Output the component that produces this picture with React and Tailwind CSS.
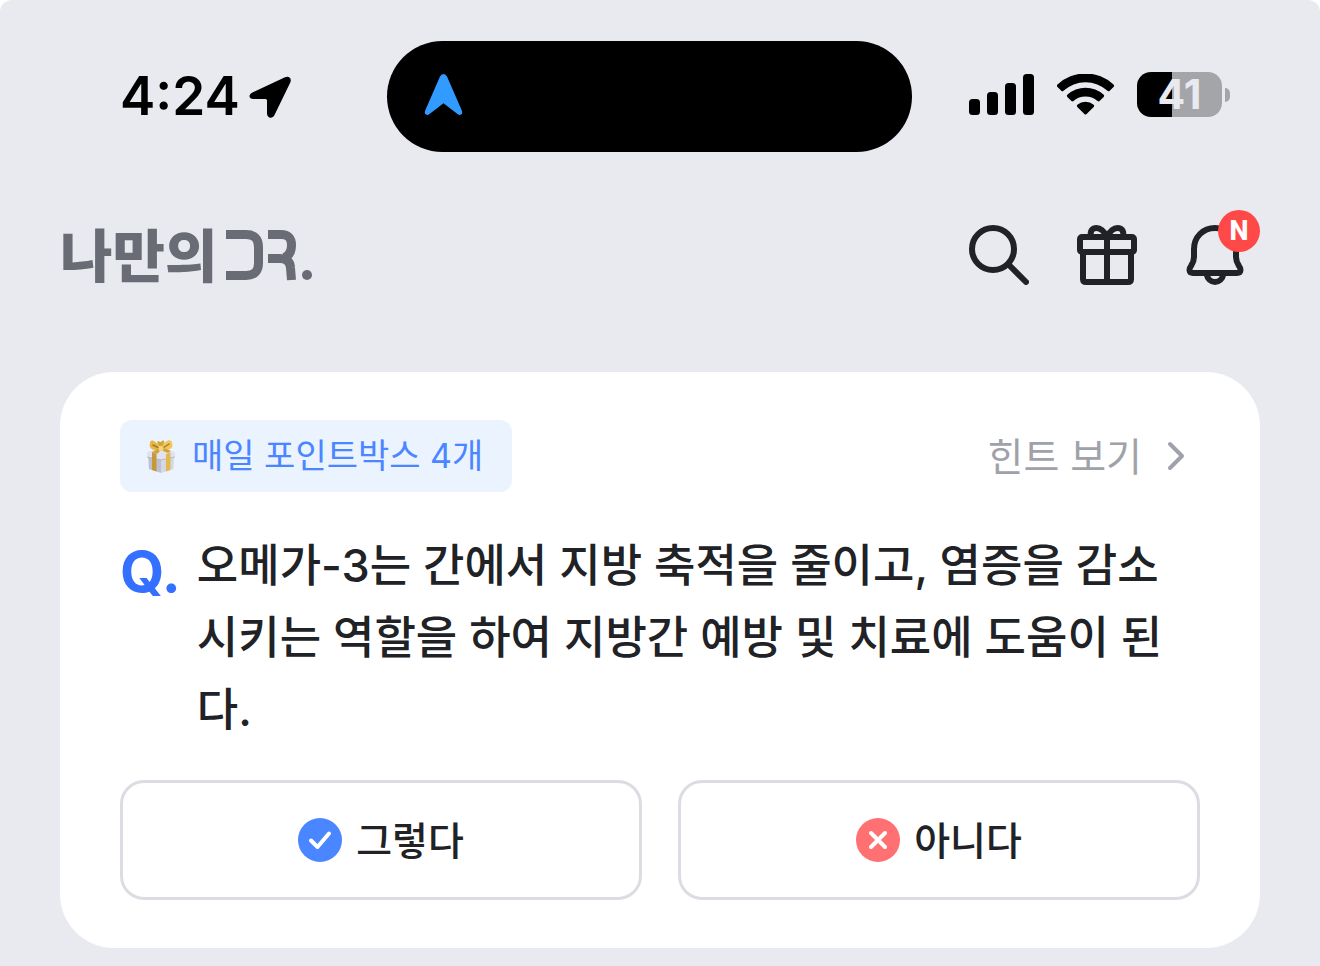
function LocationArrow() {
  return (
    <svg className="h-11 w-11 shrink-0" viewBox="248 74 44 44" aria-hidden="true">
      <path
        d="M252.500 91.500 L285 76.300 C289 74.500 292 77.500 290.300 81.500 L274.500 114 C272.500 118.200 267 117.200 267 112.500 L267 99.500 Q267 98 265.500 98 L253.500 98 C248.500 98 248.200 93.500 252.500 91.500 Z"
        fill="#000"
      />
    </svg>
  );
}

function NavigationArrow() {
  return (
    <svg className="h-11 w-10" viewBox="424 73 40 44" aria-hidden="true">
      <path
        d="M440 76.500 Q441.200 74 443.500 74 Q445.800 74 447 76.500 L461.800 110.500 Q463 113.500 461 114.600 Q459.500 115.500 457.500 114.100 L443.500 103.200 L429.500 114.100 Q427.500 115.500 426 114.600 Q424 113.500 425.200 110.500 Z"
        fill="#319bff"
      />
    </svg>
  );
}

function SignalIcon() {
  return (
    <svg className="h-[42px] w-[66px]" viewBox="0 0 66 42" role="img" aria-label="셀룰러 신호">
      <rect x="0" y="25" width="11" height="16" rx="3.500" />
      <rect x="18" y="18" width="11" height="23" rx="3.500" />
      <rect x="36" y="9" width="11" height="32" rx="3.500" />
      <rect x="54" y="0" width="11" height="41" rx="3.500" />
    </svg>
  );
}

function WifiIcon() {
  return (
    <svg className="h-[42px] w-[58px]" viewBox="1057 74 58 42" role="img" aria-label="와이파이">
      <path d="M1057.500 84.500 Q1056.300 85.700 1057.500 87 L1061.300 90.800 Q1062.300 91.800 1063.500 90.800 A32.500 32.500 0 0 1 1107.500 90.800 Q1108.700 91.800 1109.700 90.800 L1113.500 87 Q1114.700 85.700 1113.500 84.500 A41 41 0 0 0 1057.500 84.500 Z" />
      <path d="M1067.300 94.800 Q1066.300 95.900 1067.300 97 L1071.200 100.800 Q1072.300 101.900 1073.500 100.900 A18.500 18.500 0 0 1 1097.500 100.900 Q1098.700 101.900 1099.800 100.800 L1103.700 97 Q1104.700 95.900 1103.700 94.800 A27 27 0 0 0 1067.300 94.800 Z" />
      <path d="M1077.300 104.700 Q1076.300 105.800 1077.300 107 L1084.400 114 Q1085.500 115.100 1086.600 114 L1093.700 107 Q1094.700 105.800 1093.700 104.700 A12.500 12.500 0 0 0 1077.300 104.700 Z" />
    </svg>
  );
}

function Battery() {
  return (
    <div className="flex items-center gap-[3px]">
      <div className="flex h-[45px] w-[85px] items-center justify-center rounded-[14px] bg-[linear-gradient(90deg,#000_41%,#a4a5a9_41%)] text-[41px] leading-none font-bold text-[#e9eaef]">
        41
      </div>
      <div className="h-3.5 w-[5px] rounded-r-full bg-[#a4a5a9]" />
    </div>
  );
}

function SearchIcon() {
  return (
    <svg className="h-15 w-15" viewBox="969 225 60 60" fill="none" stroke="#202226" strokeWidth="6" strokeLinecap="round" aria-hidden="true">
      <circle cx="993" cy="249" r="21" />
      <path d="M1009 265 L1026 282" />
    </svg>
  );
}

function GiftIcon() {
  return (
    <svg className="h-15 w-15" viewBox="1077 225 60 60" fill="none" stroke="#202226" strokeWidth="6" strokeLinejoin="round" aria-hidden="true">
      <rect x="1080" y="237" width="54" height="15" rx="2" />
      <path d="M1083 252 V279 Q1083 282 1086 282 H1128 Q1131 282 1131 279 V252" />
      <path d="M1107 237 V282" />
      <path d="M1091 237 C1089.500 230 1093 228 1096.500 228 C1101 228 1105 233 1107 237 C1109 233 1113 228 1117.500 228 C1121 228 1124.500 230 1123 237" />
    </svg>
  );
}

function BellIcon() {
  return (
    <svg className="h-15 w-15" viewBox="1185 225 60 60" fill="none" stroke="#202226" strokeWidth="6" strokeLinejoin="round" aria-hidden="true">
      <path d="M1215 228 C1203 228 1194 237 1194 249 V257 C1194 261 1193 263 1191 266 C1189 268.500 1188.500 273 1193 273 H1237 C1241.500 273 1241 268.500 1239 266 C1237 263 1236 261 1236 257 V249 C1236 237 1227 228 1215 228 Z" />
      <path d="M1206.500 274 C1207.500 279 1211 282 1215 282 C1219 282 1222.500 279 1223.500 274" />
    </svg>
  );
}

function LogoMark() {
  return (
    <svg className="h-[54px] w-[88px]" viewBox="225 229 88 54" fill="none" stroke="#696c75" strokeWidth="9" aria-hidden="true">
      <path d="M226 234.500 H246 Q258.500 234.500 258.500 247 V263 Q258.500 275.500 246 275.500 H226" />
      <path d="M268 234.500 H281 Q291.500 234.500 291.500 245 Q291.500 255 284 257.500" />
      <path d="M268 258.500 H280 Q290 258.500 290.500 268 L291.500 280" />
      <circle cx="307" cy="275" r="5" fill="#696c75" stroke="none" />
    </svg>
  );
}

function GiftBox() {
  return (
    <svg className="h-9 w-[30px]" viewBox="0 0 30 36" aria-hidden="true">
      <path d="M2 15 L15 18 V35 L3 31 Z" fill="#bfbfd2" />
      <path d="M15 18 L28 15 L27.500 31 L15 35 Z" fill="#d6d6e5" />
      <path d="M1 14 L15 10.500 L29 14 V19 L15 22 L1 19 Z" fill="#e2e2ee" />
      <path d="M1 19 L15 22 L29 19" fill="none" stroke="#aeaec4" strokeWidth=".8" />
      <path d="M6 14 L10.500 16 V33.500 L6 32 Z" fill="#c59a35" />
      <path d="M20 16 L24.500 14.500 V32 L20 33.500 Z" fill="#e0bb4c" />
      <path d="M14 10 C9 1 4 1 4 5 C2.500 10 6 13 14 12 Z" fill="#e5b643" />
      <path d="M15 10 C20 0 26 1 26 5 C28 10 24 13 15 12 Z" fill="#efc75b" />
      <path d="M13 8 C10 4 11 2 15 4 C18 1 20 3 16 9 Z" fill="#d7a536" />
      <path d="M7 7 L13 10 M23 6 L17 10" stroke="#ab7924" strokeWidth="1.500" strokeLinecap="round" />
      <path d="M12 11 L6 14 L11 16 L15 12 L22 15 L25 13 L18 10 Z" fill="#d2a23a" />
      <circle cx="15" cy="10.500" r="2.600" fill="#f3d677" />
    </svg>
  );
}

function ChevronIcon() {
  return (
    <svg className="h-9 w-5" viewBox="0 0 20 36" fill="none" stroke="#a0a2aa" strokeWidth="4" strokeLinecap="round" strokeLinejoin="round" aria-hidden="true">
      <path d="M4 6 L16 18 L4 30" />
    </svg>
  );
}

function CheckBadge() {
  return (
    <svg className="h-11 w-11" viewBox="0 0 44 44" fill="none" aria-hidden="true">
      <circle cx="22" cy="22" r="22" fill="#4a86ff" />
      <path d="M13 22.500 L19.500 29 L31 15.500" stroke="#fff" strokeWidth="4" strokeLinecap="round" strokeLinejoin="round" />
    </svg>
  );
}

function CrossBadge() {
  return (
    <svg className="h-11 w-11" viewBox="0 0 44 44" fill="none" aria-hidden="true">
      <circle cx="22" cy="22" r="22" fill="#ff7072" />
      <path d="M15 15 L29 29 M29 15 L15 29" stroke="#fff" strokeWidth="4" strokeLinecap="round" />
    </svg>
  );
}

function StatusBar() {
  return (
    <div className="grid grid-cols-[1fr_auto_1fr] items-center pt-[41px] pr-[82px] pl-15 text-black">
      <div className="flex items-center gap-2 pl-[60px]">
        <span className="text-[53px] leading-none font-semibold">4:24</span>
        <LocationArrow />
      </div>
      <div className="flex h-[111px] w-[525px] items-center rounded-[62px] bg-black pb-1 pl-[37px]">
        <NavigationArrow />
      </div>
      <div className="flex items-center justify-end gap-[22px] pr-2 pb-1">
        <SignalIcon />
        <WifiIcon />
        <Battery />
      </div>
    </div>
  );
}

function AppHeader() {
  return (
    <header className="mb-3.5 flex h-[206px] items-center justify-between pr-[75px] pl-15">
      <a href="#" className="flex items-center gap-2 pt-0.5 text-[57px] leading-none font-black text-[#696c75]">
        <span>나만의</span>
        <LogoMark />
      </a>
      <nav className="flex items-center gap-12">
        <button type="button" aria-label="검색">
          <SearchIcon />
        </button>
        <button type="button" aria-label="선물">
          <GiftIcon />
        </button>
        <button type="button" aria-label="알림" className="relative">
          <BellIcon />
          <span className="absolute -top-[15px] -right-[15px] flex h-[42px] w-[42px] items-center justify-center rounded-full bg-[#ff4848] font-[Roboto,sans-serif] text-[27px] leading-none font-extrabold text-white">
            N
          </span>
        </button>
      </nav>
    </header>
  );
}

function QuizCard() {
  return (
    <section className="mx-15 rounded-[54px] bg-white px-15 py-12">
      <div className="flex items-center justify-between">
        <div className="flex h-18 items-center gap-4 rounded-xl bg-[#ebf3ff] pr-[29px] pl-[26px] text-[34px] leading-none text-[#4a86ff]">
          <GiftBox />
          <span>매일 포인트박스 4개</span>
        </div>
        <a href="#" className="flex items-center gap-6 pr-3.5 text-[39px] leading-none text-[#a0a2aa]">
          <span>힌트 보기</span>
          <ChevronIcon />
        </a>
      </div>
      <div className="mt-[38px] flex gap-4 pr-6 leading-[72px] text-[#202226]">
        <span className="pt-1.5 text-[57px] font-bold text-[#3370ff]">Q.</span>
        <p className="text-[45px] font-medium">
          오메가-3는 간에서 지방 축적을 줄이고, 염증을 감소시키는 역할을 하여 지방간 예방 및 치료에 도움이 된다.
        </p>
      </div>
      <div className="mt-[34px] grid grid-cols-2 gap-9 text-[39px] leading-none font-medium text-[#202226]">
        <button type="button" className="flex h-30 items-center justify-center gap-3.5 rounded-3xl border-3 border-[#dcdde3]">
          <CheckBadge />
          <span>그렇다</span>
        </button>
        <button type="button" className="flex h-30 items-center justify-center gap-3.5 rounded-3xl border-3 border-[#dcdde3]">
          <CrossBadge />
          <span>아니다</span>
        </button>
      </div>
    </section>
  );
}

export default function App() {
  return (
    <main className="min-h-screen rounded-t-xl bg-[#e9eaef] pb-4 font-['Inter','Noto_Sans_CJK_KR',sans-serif]">
      <StatusBar />
      <AppHeader />
      <QuizCard />
    </main>
  );
}
